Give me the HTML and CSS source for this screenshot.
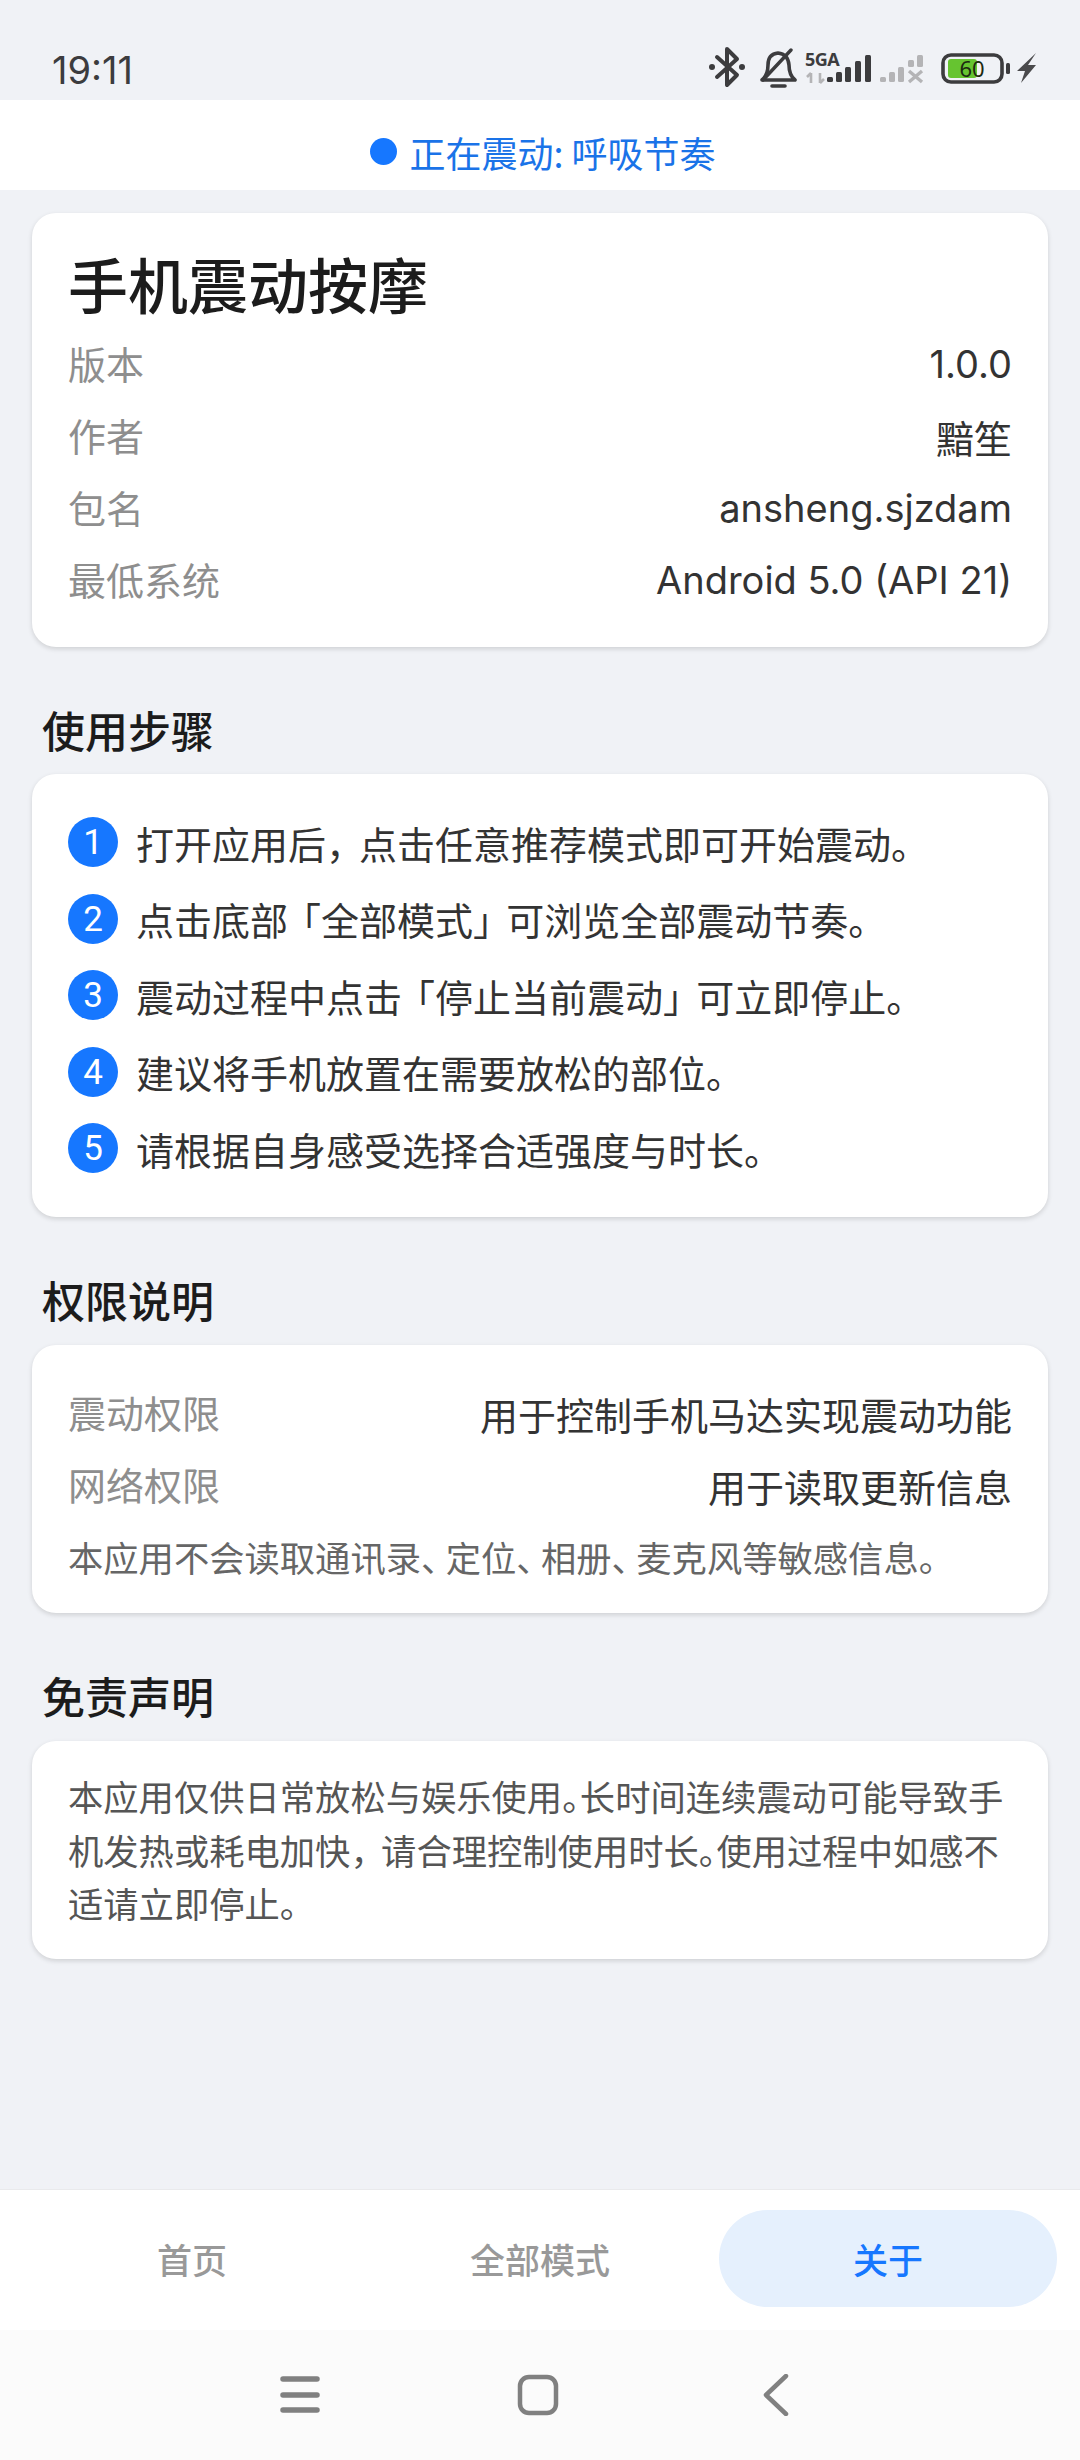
FILE: index.html
```html
<!DOCTYPE html>
<html lang="zh-CN">
<head>
  <meta charset="UTF-8" />
  <title>手机震动按摩</title>
  <link rel="stylesheet" href="styles.css">
</head>
<body>
  <div class="status-bar">
    <span class="time">19:11</span>
    <svg class="status-icons" width="340" height="50" viewBox="700 45 340 50">
      <!-- bluetooth -->
      <path d="M717 57 L737 75 L727 85 V49 L737 59 L717 77" fill="none" stroke="#3c3c3e" stroke-width="4" stroke-linejoin="round" stroke-linecap="round"/>
      <circle cx="712" cy="67" r="3" fill="#3c3c3e"/>
      <circle cx="742" cy="67" r="3" fill="#3c3c3e"/>
      <!-- muted bell -->
      <path d="M762 80 Q768 75 768 65 Q768 54 778 53 Q788 54 789 65 Q789 75 795 80 Z" fill="none" stroke="#3c3c3e" stroke-width="3.6" stroke-linejoin="round"/>
      <path d="M772 86 H785" stroke="#3c3c3e" stroke-width="3.6" stroke-linecap="round"/>
      <path d="M763 80 L791 50" stroke="#3c3c3e" stroke-width="3.4" stroke-linecap="round"/>
      <!-- 5GA signal -->
      <text class="net-label" x="805" y="66">5GA</text>
      <path d="M811 83 V73 M807 77 L811 73 M820 73 V83 M824 79 L820 83" stroke="#b4b4b6" stroke-width="2.6" fill="none"/>
      <g fill="#3c3c3e">
        <rect x="827" y="77" width="6" height="5" rx="1.5"/>
        <rect x="836" y="72" width="6" height="10" rx="1.5"/>
        <rect x="845" y="67" width="6" height="15" rx="1.5"/>
        <rect x="855" y="61" width="6" height="21" rx="1.5"/>
        <rect x="865" y="55" width="6" height="27" rx="1.5"/>
      </g>
      <!-- second signal, no service -->
      <g fill="#b4b4b6">
        <rect x="880" y="77" width="6" height="5" rx="1.5"/>
        <rect x="889" y="72" width="6" height="10" rx="1.5"/>
        <rect x="898" y="67" width="6" height="15" rx="1.5"/>
        <rect x="908" y="60" width="6" height="7" rx="1.5"/>
        <rect x="917" y="55" width="6" height="12" rx="1.5"/>
      </g>
      <path d="M909 71 L922 82 M922 71 L909 82" stroke="#b4b4b6" stroke-width="3.4"/>
      <!-- battery -->
      <rect x="943" y="55" width="59" height="27" rx="8" fill="none" stroke="#3c3c3e" stroke-width="3.6"/>
      <rect x="948" y="59" width="29" height="19" rx="3" fill="#66c430"/>
      <text class="battery-label" x="972" y="77">60</text>
      <rect x="1006" y="63" width="4" height="11" rx="1.5" fill="#3c3c3e"/>
      <!-- charging bolt -->
      <path d="M1036 53 L1017 71 H1025 L1021 83 L1036 65 H1028 Z" fill="#4a4a4c"/>
    </svg>
  </div>

  <div class="now-playing">
    <span class="now-dot"></span>
    <span class="now-text">正在震动: 呼吸节奏</span>
  </div>

  <main class="content">
    <section class="card card-info">
      <h1 class="app-name">手机震动按摩</h1>
      <div class="row"><span class="row-label">版本</span><span class="row-value">1.0.0</span></div>
      <div class="row"><span class="row-label">作者</span><span class="row-value">黯笙</span></div>
      <div class="row"><span class="row-label">包名</span><span class="row-value">ansheng.sjzdam</span></div>
      <div class="row"><span class="row-label">最低系统</span><span class="row-value">Android 5.0 (API 21)</span></div>
    </section>

    <h2 class="section-title">使用步骤</h2>
    <section class="card card-steps">
      <div class="step"><span class="step-num">1</span><span>打开应用后<span class="p-close">，</span>点击任意推荐模式即可开始震动。</span></div>
      <div class="step"><span class="step-num">2</span><span>点击底部<span class="p-open">「</span>全部模式<span class="p-close">」</span>可浏览全部震动节奏。</span></div>
      <div class="step"><span class="step-num">3</span><span>震动过程中点击<span class="p-open">「</span>停止当前震动<span class="p-close">」</span>可立即停止。</span></div>
      <div class="step"><span class="step-num">4</span><span>建议将手机放置在需要放松的部位。</span></div>
      <div class="step"><span class="step-num">5</span><span>请根据自身感受选择合适强度与时长。</span></div>
    </section>

    <h2 class="section-title">权限说明</h2>
    <section class="card card-perms">
      <div class="row"><span class="row-label">震动权限</span><span class="row-value">用于控制手机马达实现震动功能</span></div>
      <div class="row"><span class="row-label">网络权限</span><span class="row-value">用于读取更新信息</span></div>
      <p class="note">本应用不会读取通讯录<span class="dun">、</span>定位<span class="dun">、</span>相册<span class="dun">、</span>麦克风等敏感信息。</p>
    </section>

    <h2 class="section-title">免责声明</h2>
    <section class="card card-legal">
      <p class="legal">
        <span class="line">本应用仅供日常放松与娱乐使用<span class="stop">。</span>长时间连续震动可能导致手</span>
        <span class="line">机发热或耗电加快<span class="p-close">，</span>请合理控制使用时长<span class="stop">。</span>使用过程中如感不</span>
        <span class="line">适请立即停止。</span>
      </p>
    </section>
  </main>

  <nav class="tabs">
    <div class="tab">首页</div>
    <div class="tab">全部模式</div>
    <div class="tab active">关于</div>
  </nav>

  <div class="nav-bar">
    <svg width="40" height="42" viewBox="0 0 40 42">
      <path d="M3 5 H37 M3 21 H37 M3 36 H37" stroke="#808080" stroke-width="5.5" stroke-linecap="round"/>
    </svg>
    <svg width="42" height="42" viewBox="0 0 42 42">
      <rect x="3" y="3" width="36" height="36" rx="9" fill="none" stroke="#808080" stroke-width="4.5"/>
    </svg>
    <svg class="nav-back" width="28" height="42" viewBox="0 0 28 42">
      <path d="M25 2 L5 21 L25 40" fill="none" stroke="#808080" stroke-width="4.5" stroke-linecap="round" stroke-linejoin="round"/>
    </svg>
  </div>
</body>
</html>
```

FILE: styles.css
```css
* {
  box-sizing: border-box;
}

html, body {
  margin: 0;
  padding: 0;
}

body {
  width: 1080px;
  height: 2460px;
  display: flex;
  flex-direction: column;
  overflow: hidden;
  background: #f0f2f6;
  color: #1c1c1c;
  font-family: "Noto Sans CJK SC", "Noto Sans", sans-serif;
}

.status-bar {
  height: 100px;
  flex-shrink: 0;
  display: flex;
  justify-content: space-between;
  align-items: flex-start;
  padding: 45px 40px 0 52px;
}

.time {
  font-family: Inter, sans-serif;
  font-size: 38px;
  line-height: 50px;
  color: #3c3c3e;
}

.status-icons {
  display: block;
}

.net-label {
  font-family: "Noto Sans", sans-serif;
  font-size: 18px;
  font-weight: 700;
  fill: #3c3c3e;
  letter-spacing: -0.5px;
}

.battery-label {
  font-family: "Noto Sans", sans-serif;
  font-size: 22px;
  fill: #1c2a10;
  text-anchor: middle;
}

.now-playing {
  height: 90px;
  flex-shrink: 0;
  display: flex;
  justify-content: center;
  align-items: center;
  gap: 12px;
  padding: 13px 0 0 6px;
  background: #fff;
}

.now-dot {
  width: 27px;
  height: 27px;
  border-radius: 50%;
  background: #1677ff;
}

.now-text {
  font-size: 36px;
  color: #1a73e8;
}

.content {
  flex: 1;
  padding: 23px 32px 0;
}

.card {
  background: #fff;
  border-radius: 24px;
  box-shadow: 0 2px 5px rgba(0, 0, 0, 0.14);
  padding: 0 36px;
}

.card-info {
  height: 434px;
  padding-top: 30px;
}

.card-steps {
  height: 443px;
  padding-top: 30px;
}

.card-perms {
  height: 268px;
  padding-top: 33px;
}

.card-legal {
  height: 218px;
  padding-top: 28px;
}

.app-name {
  margin: 0 0 6px;
  font-size: 60px;
  line-height: 80px;
  font-weight: 500;
}

.row {
  height: 72px;
  display: flex;
  justify-content: space-between;
  align-items: center;
  font-size: 38px;
}

.row-label {
  margin-bottom: 6px;
  color: #8e8e8e;
}

.row-value {
  margin-bottom: 2px;
  font-family: Inter, "Noto Sans CJK SC", sans-serif;
  color: #333;
}

.section-title {
  margin: 52px 0 16px 10px;
  font-size: 43px;
  line-height: 60px;
  font-weight: 500;
}

.card-info + .section-title {
  margin-bottom: 15px;
}

.step {
  height: 76.5px;
  display: flex;
  align-items: center;
  gap: 18px;
  font-size: 38px;
  color: #333;
}

.step-num {
  width: 50px;
  height: 50px;
  border-radius: 50%;
  background: #1677ff;
  color: #fff;
  font-family: Roboto, sans-serif;
  font-size: 35px;
  line-height: 52px;
  text-align: center;
}

.note {
  margin: 0;
  font-size: 35.3px;
  line-height: 70px;
  color: #666;
}

.legal {
  margin: 0;
  font-size: 35.3px;
  line-height: 53.5px;
  color: #555;
}

.line {
  display: block;
}

/* the reference sets its punctuation narrower than a full em */
.p-open,
.p-close,
.dun,
.stop {
  font-feature-settings: "halt";
}

.p-open {
  margin-left: 0.37em;
}

.p-close {
  margin-right: 0.37em;
}

.dun {
  margin-right: 0.2em;
}

.tabs {
  height: 141px;
  flex-shrink: 0;
  display: grid;
  grid-template-columns: repeat(3, 338px);
  gap: 10px;
  padding: 20px 23px 0;
  background: #fff;
  border-top: 1px solid #e9eaec;
}

.tab {
  height: 97px;
  border-radius: 49px;
  display: flex;
  justify-content: center;
  align-items: center;
  font-size: 35px;
  font-weight: 500;
  color: #999;
}

.tab.active {
  background: #e5f0fd;
  color: #1677ff;
}

.nav-bar {
  height: 130px;
  flex-shrink: 0;
  display: flex;
  justify-content: center;
  align-items: flex-start;
  gap: 197px;
  padding: 44px 11px 0 0;
  background: #fbfbfb;
}

.nav-back {
  margin-left: 5px;
}
```
